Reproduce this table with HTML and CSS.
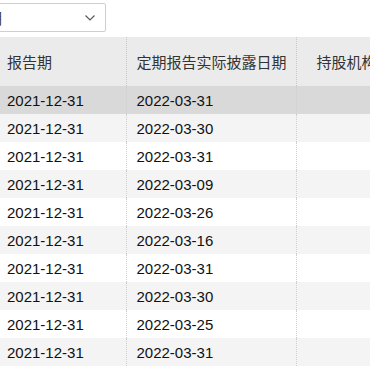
FILE: index.html
```html
<!DOCTYPE html>
<html lang="zh-CN">
<head>
<meta charset="utf-8">
<link rel="stylesheet" href="styles.css">
</head>
<body>
<div class="page">
  <div class="toolbar">
    <div class="select">
      <span class="select-text">报告期</span>
      <svg class="chevron" width="10" height="6" viewBox="0 0 10 6"><path d="M0.5 0.5 L5 5 L9.5 0.5" fill="none" stroke="#555" stroke-width="1.1"/></svg>
    </div>
  </div>
  <div class="table-wrap">
    <table class="grid">
      <colgroup><col class="c1"><col class="c2"><col class="c3"><col class="c4"></colgroup>
      <thead>
        <tr><th>报告期</th><th>定期报告实际披露日期</th><th class="col3">持股机构数</th><th></th></tr>
      </thead>
      <tbody>
        <tr class="active"><td>2021-12-31</td><td>2022-03-31</td><td class="col3"></td><td></td></tr>
        <tr><td>2021-12-31</td><td>2022-03-30</td><td class="col3"></td><td></td></tr>
        <tr><td>2021-12-31</td><td>2022-03-31</td><td class="col3"></td><td></td></tr>
        <tr><td>2021-12-31</td><td>2022-03-09</td><td class="col3"></td><td></td></tr>
        <tr><td>2021-12-31</td><td>2022-03-26</td><td class="col3"></td><td></td></tr>
        <tr><td>2021-12-31</td><td>2022-03-16</td><td class="col3"></td><td></td></tr>
        <tr><td>2021-12-31</td><td>2022-03-31</td><td class="col3"></td><td></td></tr>
        <tr><td>2021-12-31</td><td>2022-03-30</td><td class="col3"></td><td></td></tr>
        <tr><td>2021-12-31</td><td>2022-03-25</td><td class="col3"></td><td></td></tr>
        <tr><td>2021-12-31</td><td>2022-03-31</td><td class="col3"></td><td></td></tr>
      </tbody>
    </table>
  </div>
</div>
</body>
</html>
```
FILE: styles.css
```css
html, body {
  margin: 0;
  padding: 0;
  background: #fff;
}
body {
  font-family: "Liberation Sans", "Noto Sans CJK SC", sans-serif;
  color: #111;
  overflow: hidden;
}
.page {
  width: 370px;
  height: 370px;
  overflow: hidden;
}
.toolbar {
  padding-top: 3px;
  height: 29px;
  margin-left: -100px;
}
.select {
  box-sizing: border-box;
  width: 206px;
  height: 29px;
  border: 1px solid #cfcfcf;
  border-radius: 2px;
  background: #fff;
  display: flex;
  align-items: center;
  padding: 0 0 0 56px;
}
.select-text {
  font-size: 15px;
  color: #333;
  white-space: nowrap;
}
.chevron {
  display: block;
  margin-left: auto;
  margin-right: 10px;
}
.table-wrap {
  margin-top: 5px;
  margin-left: -3px;
}
.grid {
  border-collapse: collapse;
  table-layout: fixed;
  width: 700px;
  font-size: 15px;
}
.grid col.c1 { width: 129px; }
.grid col.c2 { width: 170px; }
.grid col.c3 { width: 180px; }
.grid col.c4 { width: 221px; }
.grid th {
  height: 49px;
  padding: 0 10px;
  text-align: left;
  font-weight: normal;
  color: #333;
  background: #ebebeb;
  border-right: 1px dotted #c8c8c8;
  white-space: nowrap;
  box-sizing: border-box;
}
.grid td {
  height: 28px;
  padding: 0 10px;
  border-right: 1px dotted #cfcfcf;
  white-space: nowrap;
  box-sizing: border-box;
}
.grid th.col3, .grid td.col3 {
  padding-left: 20px;
}
.grid tbody tr:nth-child(even) td {
  background: #f4f4f4;
}
.grid tbody tr.active td {
  background: #d9d9d9;
}
```
